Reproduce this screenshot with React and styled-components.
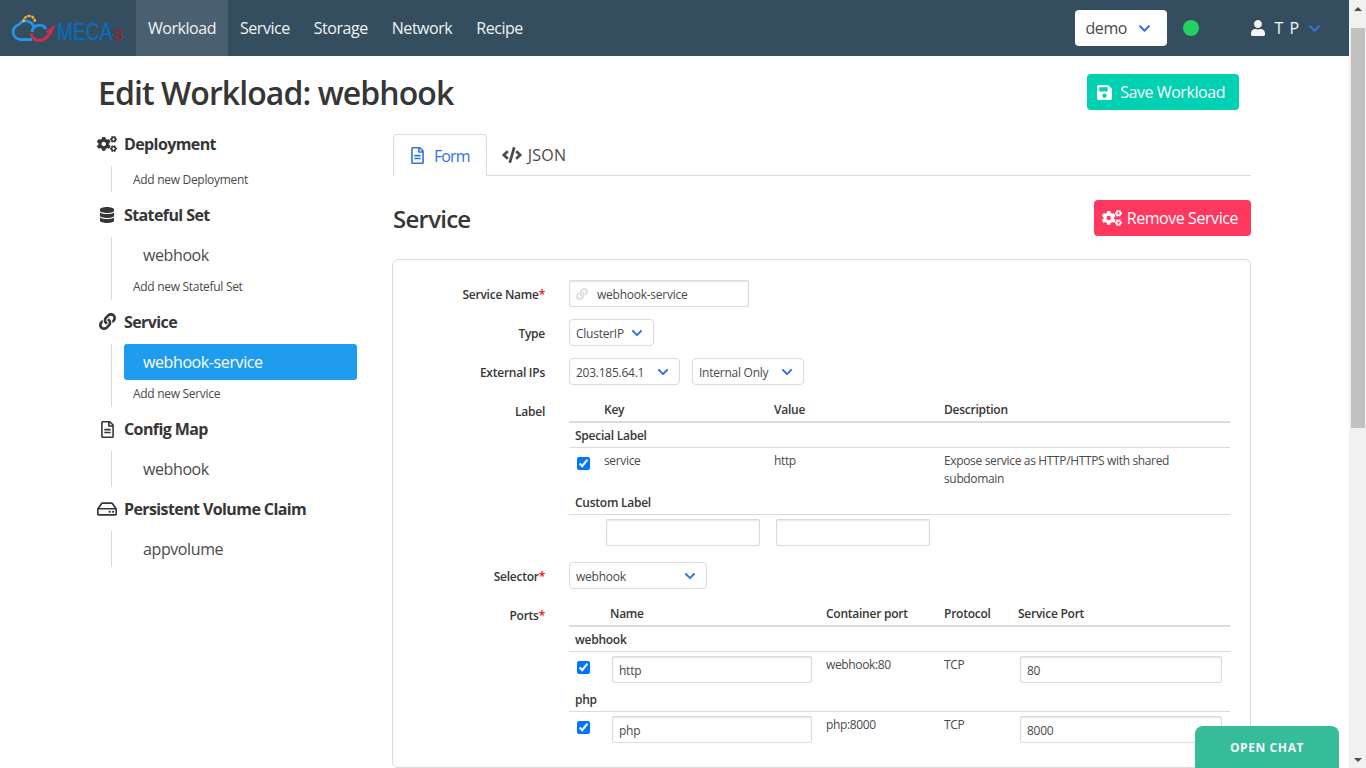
import React from "react";
import styled, { createGlobalStyle } from "styled-components";
import {
  FaChevronDown,
  FaCode,
  FaCogs,
  FaDatabase,
  FaLink,
  FaRegFileAlt,
  FaRegHdd,
  FaSave,
  FaUser,
} from "react-icons/fa";

const GlobalStyle = createGlobalStyle`
  * { box-sizing: border-box; }
  html, body { margin: 0; height: 100%; overflow: hidden; }
  body {
    font-family: "Open Sans", "Noto Sans", sans-serif;
    color: #4a4a4a;
    background: #fff;
  }
`;

const Shell = styled.div`
  display: flex;
  width: 1366px;
  height: 768px;
  overflow: hidden;
`;

const Page = styled.div`
  width: 1349px;
  flex: none;
  height: 768px;
  overflow: hidden;
`;

const Navbar = styled.nav`
  display: flex;
  align-items: stretch;
  height: 56px;
  background: #344e60;
`;

const LogoBox = styled.div`
  width: 136px;
  height: 56px;
  flex: none;
`;

const NavItem = styled.a`
  display: flex;
  align-items: center;
  padding: 0 12px;
  font-size: 16px;
  letter-spacing: -0.46px;
  color: #f0f2f3;
  background: ${(p) => (p.$active ? "#4a6070" : "transparent")};
`;

const NavEnd = styled.div`
  display: flex;
  align-items: center;
  margin-left: auto;
  padding-right: 28px;
`;

const NamespaceSelect = styled.div`
  display: flex;
  align-items: center;
  justify-content: space-between;
  width: 92px;
  height: 36px;
  padding: 0 16px 0 10px;
  background: #fff;
  border-radius: 4px;
  font-size: 16px;
  letter-spacing: -0.4px;
  color: #4a4a4a;
`;

const StatusDot = styled.span`
  width: 16px;
  height: 16px;
  margin-left: 16px;
  border-radius: 50%;
  background: #23d160;
`;

const UserMenu = styled.div`
  display: flex;
  align-items: center;
  margin-left: 51px;
  font-size: 16px;
  color: #f5f5f5;
  letter-spacing: 1px;
  white-space: pre;

  & > span {
    margin: 0 8px 0 8px;
  }
`;

const Chevron = styled(FaChevronDown)`
  flex: none;
  color: #3273dc;
  font-size: ${(p) => p.$size || 12}px;
`;

const HeadRow = styled.header`
  display: flex;
  align-items: flex-start;
  justify-content: space-between;
  height: 77px;
  padding: 18px 110px 0 98px;
`;

const Title = styled.h1`
  margin: 0;
  font-size: 32px;
  line-height: 38px;
  font-weight: 600;
  letter-spacing: -0.93px;
  color: #363636;
`;

const ActionButton = styled.button`
  display: flex;
  align-items: center;
  gap: ${(p) => p.$gap}px;
  height: 36px;
  padding: 0 ${(p) => p.$padRight}px 0 ${(p) => p.$padLeft}px;
  border: 0;
  border-radius: 4px;
  font-family: inherit;
  font-size: 16px;
  letter-spacing: -0.44px;
  color: #fff;
  background: ${(p) => p.$bg};

  & svg {
    font-size: ${(p) => p.$iconSize}px;
  }
`;

const Body = styled.div`
  display: flex;
  padding-left: 97px;
`;

const Sidebar = styled.aside`
  width: 260px;
  flex: none;
  padding-top: 0.25px;
`;

const GroupHead = styled.div`
  display: flex;
  align-items: center;
  height: 21px;
  margin: ${(p) => (p.$first ? "0 0 12px" : "11.75px 0 11.5px")};
  font-size: 16px;
  font-weight: 700;
  letter-spacing: -0.6px;
  color: #363636;
`;

const GroupIcon = styled.span`
  display: flex;
  justify-content: center;
  width: 20px;
  margin-right: 7px;
`;

const SubList = styled.div`
  margin-left: 14px;
  padding-left: 12px;
  border-left: 1px solid #dbdbdb;
`;

const SubItem = styled.div`
  display: flex;
  align-items: center;
  height: 36px;
  margin-bottom: ${(p) => (p.$spaced ? "1px" : "0")};
  padding-left: 19px;
  border-radius: 3px;
  font-size: 16px;
  letter-spacing: -0.4px;
  color: ${(p) => (p.$active ? "#fff" : "#4a4a4a")};
  background: ${(p) => (p.$active ? "#209cee" : "transparent")};
`;

const AddItem = styled.div`
  display: flex;
  align-items: center;
  height: 26px;
  padding-left: 9px;
  font-size: 12px;
  letter-spacing: -0.3px;
  color: #4a4a4a;
`;

const Content = styled.main`
  width: 859px;
  margin-left: 35px;
  flex: none;
  padding-top: 1px;
`;

const Tabs = styled.div`
  display: flex;
  height: 42px;
  margin-left: 1px;
  border-bottom: 1px solid #dbdbdb;
`;

const Tab = styled.a`
  display: flex;
  align-items: center;
  gap: ${(p) => (p.$active ? "8px" : "6px")};
  height: ${(p) => (p.$active ? "42px" : "41px")};
  padding: ${(p) => (p.$active ? "0 16px 0 15px" : "0 16px 0 14px")};
  font-size: 16px;
  letter-spacing: ${(p) => (p.$active ? "-0.9px" : "0.3px")};
  color: ${(p) => (p.$active ? "#3273dc" : "#4a4a4a")};
  background: #fff;
  border: 1px solid ${(p) => (p.$active ? "#dbdbdb" : "transparent")};
  border-bottom: 0;
  border-radius: 4px 4px 0 0;
`;

const SectionHead = styled.div`
  display: flex;
  align-items: center;
  justify-content: space-between;
  height: 36px;
  margin: 24px 0 23px 1px;
`;

const SectionTitle = styled.h2`
  margin: 0;
  font-size: 24px;
  font-weight: 600;
  letter-spacing: -0.75px;
  color: #363636;
`;

const Card = styled.section`
  display: grid;
  grid-template-columns: 152px 1fr;
  column-gap: 24px;
  row-gap: 12px;
  padding: 20px 20px 20px 0;
  border: 1px solid #dbdbdb;
  border-radius: 6px;
`;

const FieldLabel = styled.label`
  display: block;
  height: ${(p) => (p.$top ? "auto" : "27px")};
  padding-top: ${(p) => (p.$top ? "6px" : "0")};
  line-height: ${(p) => (p.$top ? "18px" : "29px")};
  text-align: right;
  font-size: 12px;
  font-weight: 600;
  letter-spacing: -0.25px;
  color: #363636;

  & em {
    font-style: normal;
    color: #ff0000;
  }
`;

const FieldRow = styled.div`
  display: flex;
  gap: 12px;
  font-size: 12px;
`;

const InputWrap = styled.div`
  position: relative;
  width: ${(p) => p.$width}px;

  & svg {
    position: absolute;
    left: 7px;
    top: 8px;
    font-size: 12px;
    color: #dbdbdb;
  }
`;

const TextInput = styled.input`
  display: block;
  width: ${(p) => (p.$width ? `${p.$width}px` : "100%")};
  height: 27px;
  margin-left: ${(p) => p.$offset || 0}px;
  padding: 2px 0 0 ${(p) => p.$padLeft || 6}px;
  border: 1px solid #dbdbdb;
  border-radius: 2px;
  box-shadow: inset 0 1px 2px rgba(10, 10, 10, 0.1);
  outline: none;
  font-family: inherit;
  font-size: 12px;
  letter-spacing: -0.25px;
  color: #4a4a4a;
  background: #fff;
`;

const SelectBox = styled.div`
  display: flex;
  align-items: center;
  justify-content: space-between;
  width: ${(p) => p.$width}px;
  height: 27px;
  padding: 0 10px 0 6px;
  border: 1px solid #dbdbdb;
  border-radius: 4px;
  font-size: 12px;
  letter-spacing: -0.25px;
  color: #4a4a4a;
  background: #fff;

  & > span {
    padding-top: 2px;
  }
`;

const Table = styled.div`
  width: 661px;
  font-size: 12px;
  letter-spacing: -0.25px;
`;

const HeadCells = styled.div`
  display: grid;
  grid-template-columns: ${(p) => p.$cols};
  align-items: center;
  height: 26px;
  border-bottom: 2px solid #dbdbdb;
  font-weight: 600;
  color: #363636;
`;

const GroupRow = styled.div`
  display: flex;
  align-items: center;
  height: 25px;
  padding-left: 6px;
  border-bottom: 1px solid #dbdbdb;
  font-weight: 600;
  color: #363636;
`;

const DataRow = styled.div`
  display: grid;
  grid-template-columns: ${(p) => p.$cols};
  padding: 4px 0 ${(p) => (p.$tall ? "2px" : "4px")};
  line-height: 18px;
  letter-spacing: -0.35px;
`;

const Check = styled.input.attrs({ type: "checkbox", defaultChecked: true })`
  display: block;
  width: 13px;
  height: 13px;
  margin: 5px 0 0 8px;
  accent-color: #0075ff;
`;

const ChatButton = styled.button`
  position: fixed;
  right: 27px;
  bottom: 0;
  width: 144px;
  height: 42px;
  border: 0;
  border-radius: 8px 8px 0 0;
  font-family: inherit;
  font-size: 12px;
  font-weight: 700;
  letter-spacing: 0.6px;
  color: #f2fbf8;
  background: #36bc98;
`;

const Scrollbar = styled.div`
  display: flex;
  flex-direction: column;
  width: 17px;
  height: 768px;
  flex: none;
  padding-left: 2px;
  background: #f1f1f1;
`;

const ScrollArrow = styled.div`
  display: flex;
  align-items: center;
  justify-content: center;
  height: 17px;
  margin-left: -2px;
  flex: none;

  &::before {
    content: "";
    border-left: 4px solid transparent;
    border-right: 4px solid transparent;
    border-${(p) => (p.$up ? "bottom" : "top")}: 4px solid #505050;
  }
`;

const ScrollThumb = styled.div`
  width: 14px;
  height: 400px;
  margin-top: 11px;
  background: #c1c1c1;
`;

const ScrollSpacer = styled.div`
  flex: 1;
`;

const Logo = () => (
  <svg width="136" height="56" viewBox="0 0 136 56" aria-label="COMECAs">
    <g transform="translate(1 0)">
      <path
        d="M31 39.5H20a7.6 7.6 0 0 1-2-15C20 21.5 24 20 27.5 21.5c2.5 1 4.5 2.6 5.5 5"
        fill="none"
        stroke="#2196e8"
        strokeWidth="2.8"
      />
      <path d="M31 32a7.5 7.5 0 0 1 14-3" fill="none" stroke="#2196e8" strokeWidth="2.8" />
      <path
        d="M22.5 22c0-3.5 2.4-6 5.7-6s5.7 2.5 5.7 6"
        fill="none"
        stroke="#f5b82e"
        strokeWidth="2.4"
        strokeDasharray="3 .8"
      />
      <path d="M30 33.5c1 4.5 4.5 7 8.5 7 4.5 0 8-3 10-7" fill="none" stroke="#c8304a" strokeWidth="3.2" />
      <path d="M44.5 31.5L54 25l-3.5 10z" fill="#c8304a" />
    </g>
    <text
      transform="translate(57 40) scale(.8 1)"
      fontFamily="'Liberation Sans', sans-serif"
      fontSize="24"
      fill="#0a6cbc"
      stroke="#0a6cbc"
      strokeWidth=".3"
    >
      MECA
    </text>
    <text x="113" y="40" fontFamily="'Liberation Sans', sans-serif" fontSize="20" fill="#a01c28">
      s
    </text>
  </svg>
);

const labelCols = "35px 170px 170px 1fr";
const portCols = "41px 216px 118px 74px 1fr";

const Group = ({ icon, title, first, items = [], activeItem, add }) => (
  <>
    <GroupHead $first={first}>
      <GroupIcon>{icon}</GroupIcon>
      {title}
    </GroupHead>
    <SubList>
      {items.map((item) => (
        <SubItem key={item} $active={item === activeItem} $spaced={!!add}>
          {item}
        </SubItem>
      ))}
      {add && <AddItem>{add}</AddItem>}
    </SubList>
  </>
);

const PortGroup = ({ name, port, container, service }) => (
  <>
    <GroupRow>{name}</GroupRow>
    <DataRow $cols={portCols}>
      <Check />
      <TextInput defaultValue={port} $width={200} $offset={2} />
      <span>{container}</span>
      <span>TCP</span>
      <TextInput defaultValue={service} $width={202} $offset={2} />
    </DataRow>
  </>
);

const Select = ({ width, children }) => (
  <SelectBox $width={width}>
    <span>{children}</span>
    <Chevron />
  </SelectBox>
);

const App = () => (
  <Shell>
    <GlobalStyle />
    <Page>
      <Navbar>
        <LogoBox>
          <Logo />
        </LogoBox>
        <NavItem $active>Workload</NavItem>
        <NavItem>Service</NavItem>
        <NavItem>Storage</NavItem>
        <NavItem>Network</NavItem>
        <NavItem>Recipe</NavItem>
        <NavEnd>
          <NamespaceSelect>
            demo
            <Chevron $size={13} />
          </NamespaceSelect>
          <StatusDot />
          <UserMenu>
            <FaUser size={16} />
            <span>T P</span>
            <Chevron $size={13} />
          </UserMenu>
        </NavEnd>
      </Navbar>

      <HeadRow>
        <Title>Edit Workload: webhook</Title>
        <ActionButton $bg="#00d1b2" $padLeft={9} $padRight={14} $gap={7} $iconSize={17}>
          <FaSave />
          Save Workload
        </ActionButton>
      </HeadRow>

      <Body>
        <Sidebar>
          <Group first icon={<FaCogs size={20} />} title="Deployment" add="Add new Deployment" />
          <Group icon={<FaDatabase size={16} />} title="Stateful Set" items={["webhook"]} add="Add new Stateful Set" />
          <Group
            icon={<FaLink size={17} />}
            title="Service"
            items={["webhook-service"]}
            activeItem="webhook-service"
            add="Add new Service"
          />
          <Group icon={<FaRegFileAlt size={17} />} title="Config Map" items={["webhook"]} />
          <Group icon={<FaRegHdd size={20} />} title="Persistent Volume Claim" items={["appvolume"]} />
        </Sidebar>

        <Content>
          <Tabs>
            <Tab $active>
              <FaRegFileAlt size={17} />
              Form
            </Tab>
            <Tab>
              <FaCode size={20} />
              JSON
            </Tab>
          </Tabs>

          <SectionHead>
            <SectionTitle>Service</SectionTitle>
            <ActionButton $bg="#ff3860" $padLeft={8} $padRight={13} $gap={5} $iconSize={20}>
              <FaCogs />
              Remove Service
            </ActionButton>
          </SectionHead>

          <Card>
            <FieldLabel>
              Service Name<em>*</em>
            </FieldLabel>
            <FieldRow>
              <InputWrap $width={180}>
                <FaLink />
                <TextInput defaultValue="webhook-service" $padLeft={27} />
              </InputWrap>
            </FieldRow>

            <FieldLabel>Type</FieldLabel>
            <FieldRow>
              <Select width={85}>ClusterIP</Select>
            </FieldRow>

            <FieldLabel>External IPs</FieldLabel>
            <FieldRow>
              <Select width={111}>203.185.64.1</Select>
              <Select width={112}>Internal Only</Select>
            </FieldRow>

            <FieldLabel $top>Label</FieldLabel>
            <Table>
              <HeadCells $cols={labelCols}>
                <span />
                <span>Key</span>
                <span>Value</span>
                <span>Description</span>
              </HeadCells>
              <GroupRow>Special Label</GroupRow>
              <DataRow $cols={labelCols} $tall>
                <Check />
                <span>service</span>
                <span>http</span>
                <span>
                  Expose service as HTTP/HTTPS with shared
                  <br />
                  subdomain
                </span>
              </DataRow>
              <GroupRow>Custom Label</GroupRow>
              <DataRow $cols={labelCols}>
                <span />
                <TextInput $width={154} $offset={2} />
                <TextInput $width={154} $offset={2} />
              </DataRow>
            </Table>

            <FieldLabel>
              Selector<em>*</em>
            </FieldLabel>
            <FieldRow>
              <Select width={138}>webhook</Select>
            </FieldRow>

            <FieldLabel $top>
              Ports<em>*</em>
            </FieldLabel>
            <Table>
              <HeadCells $cols={portCols}>
                <span />
                <span>Name</span>
                <span>Container port</span>
                <span>Protocol</span>
                <span>Service Port</span>
              </HeadCells>
              <PortGroup name="webhook" port="http" container="webhook:80" service="80" />
              <PortGroup name="php" port="php" container="php:8000" service="8000" />
            </Table>
          </Card>
        </Content>
      </Body>
    </Page>

    <Scrollbar>
      <ScrollArrow $up />
      <ScrollThumb />
      <ScrollSpacer />
      <ScrollArrow />
    </Scrollbar>

    <ChatButton>OPEN CHAT</ChatButton>
  </Shell>
);

export default App;
